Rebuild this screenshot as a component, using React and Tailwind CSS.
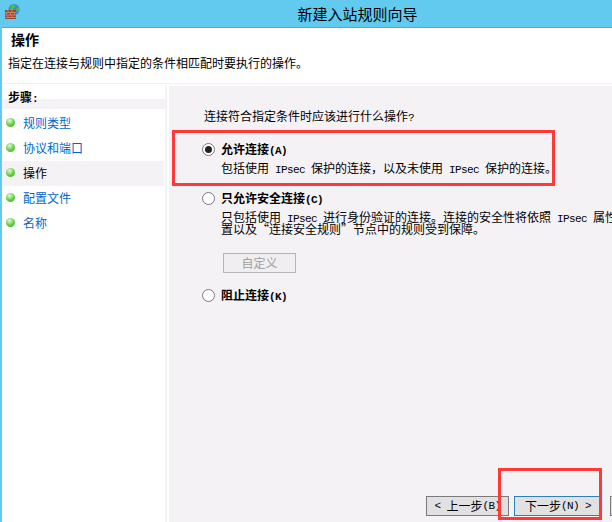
const cjk = "font-['Noto_Sans_CJK_SC','Liberation_Sans',sans-serif]";
const steps = [
  { label: '规则类型' },
  { label: '协议和端口' },
  { label: '操作', active: true },
  { label: '配置文件' },
  { label: '名称' },
];

// latin runs in the original are half-width, so keep them to a 6px advance
function Latin({ children }) {
  return (
    <span className="font-['Liberation_Mono',monospace] text-[11px] leading-[0px] tracking-[-0.6px] whitespace-pre">
      {children}
    </span>
  );
}

function FirewallIcon() {
  return (
    <svg width="15" height="15" viewBox="0 0 15 15" className="shrink-0">
      <circle cx="9" cy="5.5" r="5.5" fill="#2f8fd8" />
      <path d="M5.5 2c2-1.5 4-1.5 5-1l-.5 2.5-2 1 1 2-2 1-2-1z" fill="#58b848" />
      <path d="M11 4l3-.5.5 2.5-2.5 2z" fill="#58b848" />
      <rect x="0" y="6" width="11" height="9" fill="#9c4630" />
      <path d="M0 8.5h11M0 11h11M0 13.5h11M3 6v2.5M7 6v2.5M1.5 8.5V11M5.5 8.5V11M9.5 8.5V11M3 11v2.5M7 11v2.5" stroke="#c9806a" strokeWidth="1" />
    </svg>
  );
}

function Radio({ checked }) {
  return (
    <span className="flex h-[13px] w-[13px] shrink-0 items-center justify-center rounded-full border border-[#7a7a7a] bg-white">
      {checked && <span className="h-[7px] w-[7px] rounded-full bg-[#222222]" />}
    </span>
  );
}

function Option({ checked, children }) {
  return (
    <div className="flex h-[14px] items-center gap-[6px] text-[12px] leading-[14px] font-bold text-black">
      <Radio checked={checked} />
      <span>{children}</span>
    </div>
  );
}

function NavButton({ focused, children }) {
  return (
    <button
      className={`flex h-[20px] shrink-0 items-center justify-center border bg-[#e1e1e1] text-[12px] text-black ${
        focused ? 'w-[88px] border-[#2f7fb8]' : 'w-[83px] border-[#7a7a7a]'
      }`}
    >
      {children}
    </button>
  );
}

export default function App() {
  return (
    <div className={`relative flex h-[522px] w-[612px] flex-col overflow-hidden bg-[#62c9ef] ${cjk}`}>
      {/* Title bar */}
      <div className="relative flex h-[27px] shrink-0 items-center justify-center pl-[103px]">
        <div className="absolute left-[5px] top-[4px]">
          <FirewallIcon />
        </div>
        <span className="text-[15px] leading-[20px] text-black">新建入站规则向导</span>
      </div>

      <div className="ml-[2px] flex min-h-0 flex-1 flex-col border-t border-[#55a9cc] bg-white">
        {/* Header */}
        <div className="h-[56px] shrink-0 border-b border-[#f0f0f0] pl-[6px]">
          <h1 className="mt-[1px] pl-[3px] text-[14px] leading-[20px] font-bold text-black">操作</h1>
          <p className="mt-[5px] text-[12px] leading-[18px] text-black">
            指定在连接与规则中指定的条件相匹配时要执行的操作。
          </p>
        </div>

        <div className="flex min-h-0 flex-1 pt-[2px]">
          {/* Steps pane */}
          <aside className="w-[165px] shrink-0 border-r-2 border-[#f3f3f3] pt-[1px]">
            <div className="h-[22px] bg-[linear-gradient(#ffffff_12px,#f5f2f6_12px)] pl-[6px] text-[12px] leading-[20px] font-bold text-black">
              步骤<Latin>:</Latin>
            </div>
            <ul className="mt-[2px] pr-[1px]">
              {steps.map((step) => (
                <li
                  key={step.label}
                  className={`flex h-[25px] items-center pb-[2px] text-[12px] ${
                    step.active ? 'bg-[#f5f2f6] text-black' : 'text-[#0066cc]'
                  }`}
                >
                  <span className="ml-[4px] h-[9px] w-[9px] shrink-0 rounded-full bg-[radial-gradient(circle_at_40%_30%,#e6f5e0,#62cc3f_55%,#3ea82a)]" />
                  <span className="ml-[8px]">{step.label}</span>
                </li>
              ))}
            </ul>
          </aside>

          {/* Main pane */}
          <main className="ml-[2px] flex min-w-0 flex-1 flex-col overflow-hidden bg-[#f5f2f6] pl-[33px] text-[12px] text-black">
            <p className="mt-[21px] ml-[2px] whitespace-nowrap leading-[18px]">
              连接符合指定条件时应该进行什么操作<Latin>?</Latin>
            </p>

            <div className="mt-[17px]">
              <Option checked>
                允许连接<Latin>(A)</Latin>
              </Option>
              <p className="mt-[4px] ml-[19px] whitespace-nowrap leading-[16px]">
                包括使用<Latin> IPsec </Latin>保护的连接，以及未使用<Latin> IPsec </Latin>保护的连接。
              </p>
            </div>

            <div className="mt-[15px]">
              <Option>
                只允许安全连接<Latin>(C)</Latin>
              </Option>
              <p className="mt-[6px] ml-[19px] whitespace-nowrap leading-[12px]">
                只包括使用<Latin> IPsec </Latin>进行身份验证的连接。连接的安全性将依照<Latin> IPsec </Latin>属性中的设
                <br />
                置以及“连接安全规则”节点中的规则受到保障。
              </p>
              <button className="mt-[18px] ml-[21px] flex h-[20px] w-[73px] items-center justify-center border border-[#b5b5b5] bg-[#f0eef1] text-[12px] text-[#a0a0a0]">
                自定义
              </button>
            </div>

            <div className="mt-[15px]">
              <Option>
                阻止连接<Latin>(K)</Latin>
              </Option>
            </div>

            <div className="mt-auto mb-[6px] flex pl-[224px]">
              <NavButton>
                <Latin>{'< '}</Latin>上一步<Latin>(B)</Latin>
              </NavButton>
              <span className="w-[5px] shrink-0" />
              <NavButton focused>
                下一步<Latin>{'(N) >'}</Latin>
              </NavButton>
              <span className="w-[8px] shrink-0" />
              <NavButton>取消</NavButton>
            </div>
          </main>
        </div>
      </div>

      {/* Red annotation boxes */}
      <div className="absolute left-[172px] top-[130px] h-[56px] w-[383px] border-[3px] border-[#ff3838]" />
      <div className="absolute left-[498px] top-[468px] h-[52px] w-[104px] border-[3px] border-[#ff3838]" />
    </div>
  );
}
